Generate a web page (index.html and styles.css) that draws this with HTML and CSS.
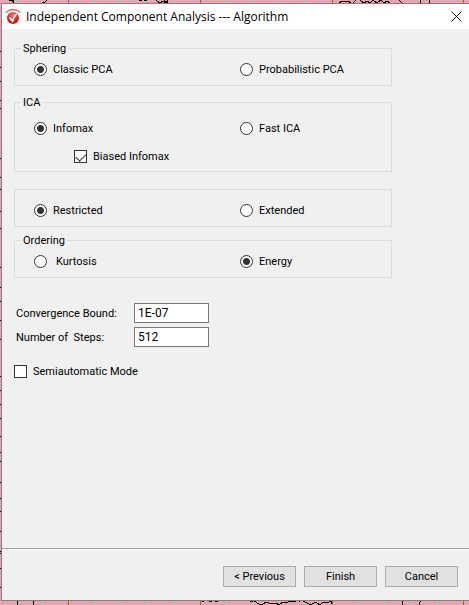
FILE: index.html
```html
<!DOCTYPE html>
<html lang="en">
<head>
<meta charset="utf-8">
<title>Independent Component Analysis --- Algorithm</title>
<link rel="stylesheet" href="styles.css">
</head>
<body>
<svg class="traces" width="469" height="605" viewBox="0 0 469 605" aria-hidden="true" shape-rendering="crispEdges" fill="none">
  <path stroke="#98dc9c" d="M16.5 0V605M42.5 0V605M95.5 0V605M121.5 0V605M147.5 0V605M174.5 0V605M226.5 0V605M253.5 0V605M279.5 0V605M305.5 0V605M358.5 0V605M384.5 0V605M411.5 0V605M437.5 0V605"/>
  <path stroke="#847400" d="M68.5 0V605M200.5 0V605M332.5 0V605M463.5 0V605"/>
  <path stroke="#000" d="M0 51.5h2M0 67.5h2M0 81.5h2M0 100.5h2M0 108.5h2M0 158.5h2M0 177.5h2M0 189.5h2M0 211.5h2M0 228.5h2M0 267.5h2M0 287.5h2M0 301.5h2M0 320.5h2M0 339.5h2M0 376.5h2M0 390.5h2M0 404.5h2M0 418.5h2M0 436.5h2M0 452.5h2M0 461.5h2M0 482.5h2M0 498.5h2M0 511.5h2M0 531.5h2M0 551.5h2M0 553.5h2M0 568.5h2M0 587.5h2"/>
  <path stroke="#000" d="M9 .5h3l2 3M13.500 0v3M47 0l-2 2h-3M139 .5h3M144 .5h3M156 0l4 3 3-2 3 2 2-3M164 0l4 3M182 3.500h2M339 3l3-2h6l3 2M353 3l3-3M360 0l4 3 3-2 3 2 3-3 4 3 4-3 3 3 3-2 3 2M399 0l3 3M417 3.500h3V0M429.500 0v3"/>
  <path stroke="#000" d="M17.500 601v4M33.500 601v4M202 601.500h2M209 601.500h3M215 601.500h3M250 601.500h3M254 601l5 3h4l3-2 3 1h7l3 2 4-3h5l3-1 3 1 4-2 2 2M303 601l6 3h3l4-2 4 3 3-3 4 1 4-2v3M402.500 601v4M421 601l-2 2v2"/>
</svg>
<main class="dialog">
  <header class="titlebar">
    <svg class="logo" width="16" height="18" viewBox="0 0 16 18" aria-hidden="true">
      <defs><radialGradient id="ball" cx=".5" cy=".3" r=".7"><stop offset="0" stop-color="#ef8078"/><stop offset=".55" stop-color="#d9302b"/><stop offset="1" stop-color="#b41717"/></radialGradient></defs>
      <path d="M.5 4.500Q8-1.500 15.500 4.500" fill="none" stroke="#e06a64" stroke-width="1.300"/>
      <circle cx="8" cy="10" r="6" fill="url(#ball)"/>
      <path d="M4.500 9.500 7.500 13Q8.500 9 11.500 6" fill="none" stroke="#fff" stroke-width="1.700"/>
    </svg>
    <h1 class="title">Independent Component Analysis --- Algorithm</h1>
    <button class="close" type="button" aria-label="Close">
      <svg width="11" height="11" viewBox="0 0 11 11" aria-hidden="true"><path d="M.5.5l10 10M10.500.5l-10 10" stroke="#111" stroke-width="1"/></svg>
    </button>
  </header>
  <form class="form">
    <div class="content">
      <fieldset class="group">
        <legend>Sphering</legend>
        <div class="options">
          <label class="option"><input type="radio" name="sphering" checked>Classic PCA</label>
          <label class="option"><input type="radio" name="sphering">Probabilistic PCA</label>
        </div>
      </fieldset>
      <fieldset class="group group-ica">
        <legend>ICA</legend>
        <div class="options">
          <label class="option"><input type="radio" name="ica" checked>Infomax</label>
          <label class="option"><input type="radio" name="ica">Fast ICA</label>
          <label class="option nested"><input type="checkbox" checked>Biased Infomax</label>
        </div>
      </fieldset>
      <fieldset class="group group-plain">
        <div class="options">
          <label class="option"><input type="radio" name="range" checked>Restricted</label>
          <label class="option"><input type="radio" name="range">Extended</label>
        </div>
      </fieldset>
      <fieldset class="group group-ordering">
        <legend>Ordering</legend>
        <div class="options">
          <label class="option spaced"><input type="radio" name="ordering">Kurtosis</label>
          <label class="option"><input type="radio" name="ordering" checked>Energy</label>
        </div>
      </fieldset>
      <div class="fields">
        <label for="bound">Convergence Bound:</label>
        <input id="bound" type="text" value="1E-07">
        <label for="steps">Number of&nbsp; Steps:</label>
        <input id="steps" type="text" value="512">
      </div>
      <label class="option"><input type="checkbox">Semiautomatic Mode</label>
    </div>
    <footer class="actions">
      <button class="action" type="button">&lt; Previous</button>
      <button class="action" type="submit">Finish</button>
      <button class="action" type="button">Cancel</button>
    </footer>
  </form>
</main>
</body>
</html>
```
FILE: styles.css
```css
* { box-sizing: border-box; }

body {
  margin: 0;
  min-height: 100vh;
  padding: 3px 0 4px 1px;
  display: flex;
  position: relative;
  overflow: hidden;
  background: #e1a6b1;
  color: #000;
  font: 11px/15px Roboto, "Liberation Sans", sans-serif;
}

.traces { position: absolute; top: 0; left: 0; }

.dialog {
  position: relative;
  flex: 1;
  display: flex;
  flex-direction: column;
  background: #f0f0f0;
  border: 1px solid #96777d;
  border-right: 0;
}

.titlebar {
  display: flex;
  align-items: center;
  height: 25px;
  padding: 0 7px 0 3px;
  background: #fff;
}

.title {
  flex: 1;
  margin: 0 0 0 5px;
  font: 12px/16px "Open Sans", "Noto Sans", sans-serif;
}

.close {
  display: flex;
  padding: 0;
  border: 0;
  background: none;
}

.form {
  flex: 1;
  display: flex;
  flex-direction: column;
}

.content {
  flex: 1;
  padding: 12px 77px 0 12px;
}

.group {
  min-width: 0;
  margin: 0;
  padding: 6px 0 8px 19px;
  border: 1px solid #dcdcdc;
}

.group-ica { margin-top: 9px; padding: 11px 0 7px 19px; }
.group-plain { margin-top: 17px; padding-top: 13px; }
.group-ordering { margin-top: 6px; }

legend {
  margin-left: -13px;
  padding: 0 2px;
}

.options {
  display: grid;
  grid-template-columns: 206px 1fr;
  row-gap: 13px;
}

.option {
  display: flex;
  align-items: center;
  gap: 6px;
}

.nested { padding-left: 40px; }
.spaced { gap: 9px; }

input[type="radio"],
input[type="checkbox"] {
  appearance: none;
  width: 13px;
  height: 13px;
  margin: 0;
  border: 1px solid #333;
  background: #fff;
}

input[type="radio"] { border-radius: 50%; }

input[type="radio"]:checked {
  background: radial-gradient(circle, #333 3px, #fff 4px);
}

input[type="checkbox"]:checked::before {
  content: "";
  display: block;
  width: 9px;
  height: 5px;
  margin: 2px 1px;
  border: solid #333;
  border-width: 0 0 1px 1px;
  transform: rotate(-45deg);
}

.fields {
  display: grid;
  grid-template-columns: 118px 75px;
  align-items: center;
  gap: 4px 0;
  padding-left: 2px;
  margin: 25px 0 17px;
}

.fields input {
  width: 75px;
  height: 20px;
  padding: 0 3px;
  border: 1px solid #7a7a7a;
  background: #fff;
  color: #000;
  font: inherit;
  font-size: 12px;
}

.actions {
  display: flex;
  justify-content: flex-end;
  gap: 8px;
  padding: 17px 11px 13px;
  border-top: 1px solid #a0a0a0;
  box-shadow: inset 0 1px #fff;
}

.action {
  width: 73px;
  height: 21px;
  padding: 0;
  border: 1px solid #adadad;
  background: #e1e1e1;
  color: #000;
  font: inherit;
}
```
